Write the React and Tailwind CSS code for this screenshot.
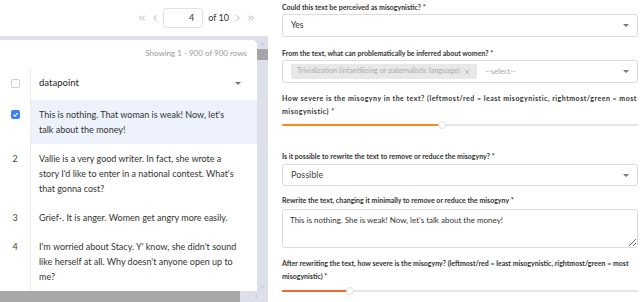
import React from 'react';
import { ChevronsLeft, ChevronLeft, ChevronRight, ChevronsRight, ChevronUp, ChevronDown, X } from 'lucide-react';

const rows = [
  { id: 1, checked: true, lines: ["This is nothing. That woman is weak! Now, let's", 'talk about the money!'] },
  {
    id: 2,
    lines: [
      'Vallie is a very good writer. In fact, she wrote a',
      "story I'd like to enter in a national contest. What's",
      'that gonna cost?',
    ],
  },
  { id: 3, lines: ['Grief-. It is anger. Women get angry more easily.'] },
  {
    id: 4,
    lines: [
      "I'm worried about Stacy. Y' know, she didn't sound",
      "like herself at all. Why doesn't anyone open up to",
      'me?',
    ],
  },
];

const Caret = () => (
  <span className="w-0 h-0 border-l-[3px] border-r-[3px] border-t-[3px] border-l-transparent border-r-transparent border-t-[#777]" />
);

const Checkbox = ({ checked }) =>
  checked ? (
    <span className="w-[9px] h-[9px] rounded-[2px] bg-[#3b82f6] flex items-center justify-center">
      <svg width="7" height="7" viewBox="0 0 10 10">
        <path d="M2 5.2 L4.2 7.3 L8 3" stroke="white" strokeWidth="1.6" fill="none" />
      </svg>
    </span>
  ) : (
    <span className="w-[9px] h-[9px] rounded-[2px] border border-[#cfcfcf] bg-white" />
  );

const Label = ({ children, className = '' }) => (
  <div className={`text-[7px] font-bold text-[#333] leading-[13px] whitespace-nowrap ${className}`}>{children}</div>
);

const Select = ({ children, className = '' }) => (
  <div className={`flex items-center justify-between border border-[#dcdcdc] rounded-[3px] bg-white pl-[8px] pr-[8px] ${className}`}>
    <div className="flex items-center gap-[8px]">{children}</div>
    <Caret />
  </div>
);

const Slider = ({ pct, color }) => (
  <div className="relative h-[8px] flex items-center">
    <div className="w-full h-[2px] bg-[#e6e6e6] rounded-full" />
    <div className="absolute left-0 h-[2px] rounded-full" style={{ width: `${pct}%`, background: color }} />
    <div
      className="absolute w-[8px] h-[8px] rounded-full bg-white border border-[#e0e0e0] -translate-x-1/2"
      style={{ left: `${pct}%` }}
    />
  </div>
);

export default function App() {
  return (
    <div className="w-[640px] h-[302px] flex overflow-hidden bg-white font-['Lato',sans-serif]">
      {/* left: data table */}
      <div className="w-[268px] shrink-0 flex flex-col">
        <div className="h-[36px] flex items-center justify-end pr-[12px] gap-[3px] text-[#888]">
          <ChevronsLeft size={10} strokeWidth={1.5} />
          <ChevronLeft size={10} strokeWidth={1.5} />
          <div className="w-[40px] h-[20px] border border-[#e2e2e2] rounded-[3px] flex items-center justify-end pr-[8px] text-[9px] text-[#333]">
            4
          </div>
          <span className="text-[9px] text-[#333] ml-[2px] mr-[1px]">of 10</span>
          <ChevronRight size={10} strokeWidth={1.5} />
          <ChevronsRight size={10} strokeWidth={1.5} />
        </div>
        <div className="flex-1 bg-[#dde0ea] pt-[4px] flex flex-col min-h-0">
          <div className="flex flex-1 min-h-0">
            <div className="flex-1 bg-white rounded-tr-[5px] flex flex-col overflow-hidden">
              <div className="h-[28px] flex items-center justify-end pr-[10px] text-[8px] text-[#999]">
                Showing 1 - 900 of 900 rows
              </div>
              <div className="flex h-[35px]">
                <div className="w-[30px] flex items-center justify-center">
                  <Checkbox />
                </div>
                <div className="flex-1 border-l border-[#ececec] flex items-center justify-between pl-[8px] pr-[16px]">
                  <span className="text-[9.5px] text-[#333] font-medium">datapoint</span>
                  <Caret />
                </div>
              </div>
              {rows.map((r) => (
                <div key={r.id} className="flex">
                  <div className="w-[30px] flex justify-center pt-[7px] text-[9px] leading-[15px] text-[#444]">
                    {r.checked ? (
                      <span className="h-[15px] flex items-center">
                        <Checkbox checked />
                      </span>
                    ) : (
                      r.id
                    )}
                  </div>
                  <div
                    className={`flex-1 border-l border-[#ececec] pl-[8px] py-[7px] text-[9px] leading-[15px] text-[#333] ${
                      r.checked ? 'bg-[#edf2fc]' : ''
                    }`}
                  >
                    {r.lines.map((l, i) => (
                      <div key={i} className="whitespace-nowrap">
                        {l}
                      </div>
                    ))}
                  </div>
                </div>
              ))}
            </div>
            <div className="w-[11px] flex flex-col items-center text-[#999]">
              <ChevronUp size={7} strokeWidth={1.5} className="mt-[1px]" />
              <div className="w-[11px] h-[11px] bg-[#a6a6a6] mt-[1px]" />
              <div className="flex-1" />
              <ChevronDown size={7} strokeWidth={1.5} className="mb-[1px]" />
            </div>
          </div>
          <div className="h-[11px] flex items-center bg-[#dde0ea]">
            <div className="w-[240px] h-[11px] bg-[#a8a8a8]" />
            <ChevronRight size={7} strokeWidth={1.5} className="ml-[13px] text-[#999]" />
          </div>
        </div>
      </div>

      {/* right: annotation form */}
      <div className="flex-1 min-w-0 pl-[14px] pr-[2px] pt-[1px] flex flex-col">
        <Label>Could this text be perceived as misogynistic? *</Label>
        <Select className="h-[23px]">
          <span className="text-[8.5px] text-[#333]">Yes</span>
        </Select>

        <div className="mt-[10px]">
          <Label>From the text, what can problematically be inferred about women? *</Label>
        </div>
        <Select className="h-[23px] pl-[4px]">
          <span className="bg-[#e8e8e8] rounded-[2px] h-[15px] px-[6px] flex items-center gap-[4px] text-[7.3px] text-[#aaa] whitespace-nowrap">
            Trivialization (infantilizing or paternalistic language)
            <X size={8} strokeWidth={1.5} className="text-[#888]" />
          </span>
          <span className="text-[7.5px] text-[#aaa]">--select--</span>
        </Select>

        <div className="mt-[9px]">
          <Label className="tracking-[0.5px]">
            How severe is the misogyny in the text? (leftmost/red = least misogynistic, rightmost/green = most
            <br />
            misogynistic) *
          </Label>
        </div>
        <div className="mt-[3px]">
          <Slider pct={45} color="#fb8a1e" />
        </div>

        <div className="mt-[21px]">
          <Label>Is it possible to rewrite the text to remove or reduce the misogyny? *</Label>
        </div>
        <Select className="h-[22px] mt-[1px]">
          <span className="text-[9px] text-[#444]">Possible</span>
        </Select>

        <div className="mt-[8px]">
          <Label>Rewrite the text, changing it minimally to remove or reduce the misogyny *</Label>
        </div>
        <textarea
          readOnly
          defaultValue="This is nothing. She is weak! Now, let's talk about the money!"
          className="h-[39px] mt-[2px] border border-[#dcdcdc] rounded-[3px] px-[7px] py-[4px] text-[8px] leading-[12px] text-[#333] outline-none resize-y"
        />

        <div className="mt-[9px]">
          <Label>
            After rewriting the text, how severe is the misogyny? (leftmost/red = least misogynistic, rightmost/green = most
            <br />
            misogynistic) *
          </Label>
        </div>
        <div className="mt-[4px]">
          <Slider pct={19} color="#f2682f" />
        </div>
      </div>
    </div>
  );
}
